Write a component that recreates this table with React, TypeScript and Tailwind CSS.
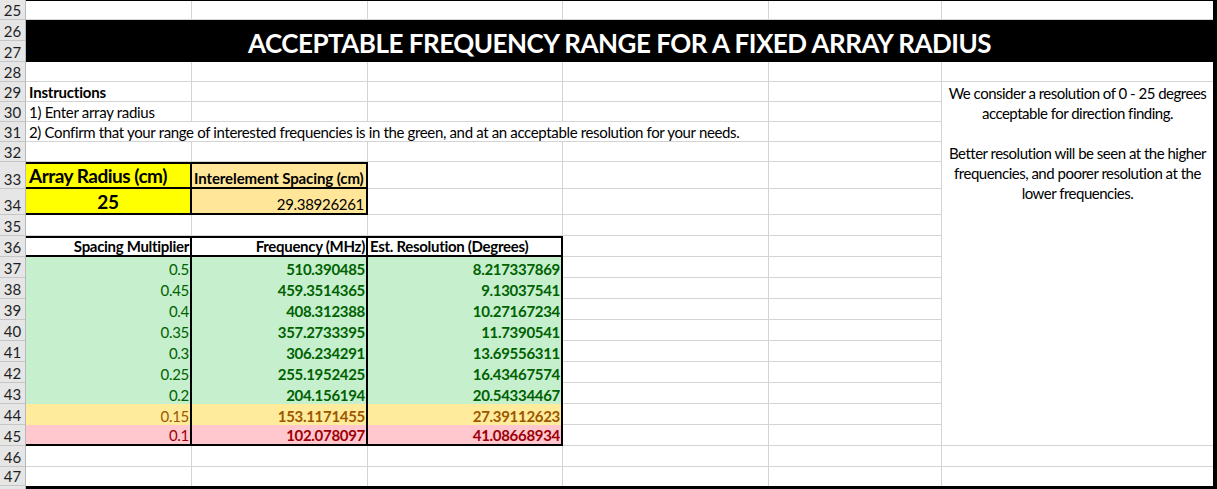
import React from "react";

const headerRows = [
  { n: 25, h: "h-[20px]" },
  { n: 26, h: "h-[21px]" },
  { n: 27, h: "h-[21px]" },
  { n: 28, h: "h-[20px]" },
  { n: 29, h: "h-[20px]" },
  { n: 30, h: "h-[20px]" },
  { n: 31, h: "h-[20px]" },
  { n: 32, h: "h-[20px]" },
  { n: 33, h: "h-[27px]" },
  { n: 34, h: "h-[26px]" },
  { n: 35, h: "h-[21px]" },
  { n: 36, h: "h-[21px]" },
  { n: 37, h: "h-[21px]" },
  { n: 38, h: "h-[21px]" },
  { n: 39, h: "h-[21px]" },
  { n: 40, h: "h-[21px]" },
  { n: 41, h: "h-[21px]" },
  { n: 42, h: "h-[21px]" },
  { n: 43, h: "h-[21px]" },
  { n: 44, h: "h-[21px]" },
  { n: 45, h: "h-[21px]" },
  { n: 46, h: "h-[21px]" },
  { n: 47, h: "h-[19px]" },
];

const tableRows = [
  { m: "0.5", f: "510.390485", r: "8.217337869", tone: "good" },
  { m: "0.45", f: "459.3514365", r: "9.13037541", tone: "good" },
  { m: "0.4", f: "408.312388", r: "10.27167234", tone: "good" },
  { m: "0.35", f: "357.2733395", r: "11.7390541", tone: "good" },
  { m: "0.3", f: "306.234291", r: "13.69556311", tone: "good" },
  { m: "0.25", f: "255.1952425", r: "16.43467574", tone: "good" },
  { m: "0.2", f: "204.156194", r: "20.54334467", tone: "good" },
  { m: "0.15", f: "153.1171455", r: "27.39112623", tone: "warn" },
  { m: "0.1", f: "102.078097", r: "41.08668934", tone: "bad" },
];

const toneClass: Record<string, string> = {
  good: "bg-[#c6efce] text-[#006100]",
  warn: "bg-[#ffeb9c] text-[#9c5700]",
  bad: "bg-[#ffc7ce] text-[#9c0006]",
};

// plain gridline cell
const g = "border-r border-b border-[#d4d4d4]";
const gF = "border-b border-[#d4d4d4]";

const Blank = ({ last }: { last?: boolean }) => <div className={last ? gF : g} />;

const App: React.FC = () => {
  return (
    <div className="flex w-[1217px] h-[489px] bg-white font-['Lato','Liberation_Sans',sans-serif] text-[15px] tracking-[-0.3px] text-black overflow-hidden">
      {/* row numbers */}
      <div className="flex flex-col w-[26px] shrink-0 bg-[#e6e6e6] border-r border-[#b8b8b8]">
        {headerRows.map((r) => (
          <div
            key={r.n}
            className={`${r.h} flex items-end justify-center border-b border-[#c6c6c6] text-[15px] tracking-normal leading-[18px] text-[#1f1f1f]`}
          >
            {r.n}
          </div>
        ))}
        <div className="h-[3px]" />
      </div>

      {/* sheet */}
      <div className="grid grid-cols-[166px_176px_195px_206px_173px_271px] grid-rows-[19px_21px_21px_20px_20px_20px_20px_20px_27px_26px_21px_21px_21px_21px_21px_21px_21px_21px_21px_21px_21px_21px_19px] border-t border-r-4 border-b-[3px] border-black">
        {/* 25 */}
        <Blank />
        <Blank />
        <Blank />
        <Blank />
        <Blank />
        <Blank last />

        {/* 26-27 title */}
        <div className="col-span-6 row-span-2 bg-black flex items-center justify-center pt-[4px] text-white font-bold text-[26px] tracking-[-0.5px] leading-none whitespace-nowrap">
          ACCEPTABLE FREQUENCY RANGE FOR A FIXED ARRAY RADIUS
        </div>

        {/* 28 */}
        <Blank />
        <Blank />
        <Blank />
        <Blank />
        <Blank />
        <Blank last />

        {/* 29 */}
        <div className={`${g} flex items-end pl-[3px] font-bold tracking-[-0.2px] leading-[18px]`}>Instructions</div>
        <Blank />
        <Blank />
        <Blank />
        <Blank />
        <div className="row-span-17 border-b border-[#d4d4d4] flex flex-col items-center pt-[1px] leading-[20px] tracking-[-0.5px] text-center whitespace-nowrap">
          <span>We consider a resolution of 0 - 25 degrees</span>
          <span>acceptable for direction finding.</span>
          <span>&nbsp;</span>
          <span>Better resolution will be seen at the higher</span>
          <span>frequencies, and poorer resolution at the</span>
          <span>lower frequencies.</span>
        </div>

        {/* 30 */}
        <div className={`${g} flex items-end pl-[3px] leading-[18px]`}>1) Enter array radius</div>
        <Blank />
        <Blank />
        <Blank />
        <Blank />

        {/* 31 - text overflows into B..D */}
        <div className="border-b border-[#d4d4d4] flex items-end pl-[3px] leading-[18px] tracking-[-0.35px] whitespace-nowrap overflow-visible relative z-10">
          2) Confirm that your range of interested frequencies is in the green, and at an acceptable resolution for your needs.
        </div>
        <div className="border-b border-[#d4d4d4]" />
        <div className="border-b border-[#d4d4d4]" />
        <Blank />
        <Blank />

        {/* 32 */}
        <Blank />
        <Blank />
        <Blank />
        <Blank />
        <Blank />

        {/* 33 */}
        <div className="bg-[#ffff00] border-t-2 border-b-2 border-r-2 border-black flex items-end pl-[3px] font-bold text-[19px] tracking-[-0.5px] leading-[22px]">
          Array Radius (cm)
        </div>
        <div className="bg-[#ffe699] border-t-2 border-b-2 border-r-2 border-black flex items-end pl-[2px] font-bold tracking-[-0.1px] leading-[18px] whitespace-nowrap">
          Interelement Spacing (cm)
        </div>
        <Blank />
        <Blank />
        <Blank />

        {/* 34 */}
        <div className="bg-[#ffff00] border-b-2 border-r-2 border-black flex items-end justify-center font-bold text-[19px] leading-[22px]">
          25
        </div>
        <div className="bg-[#ffe699] border-b-2 border-r-2 border-black flex items-end justify-end pr-[2px] leading-[18px]">
          29.38926261
        </div>
        <Blank />
        <Blank />
        <Blank />

        {/* 35 */}
        <Blank />
        <Blank />
        <Blank />
        <Blank />
        <Blank />

        {/* 36 */}
        <div className="border-t-2 border-b-2 border-r-2 border-black flex items-end justify-end pr-[1px] font-bold tracking-[-0.3px] leading-[18px] whitespace-nowrap">
          Spacing Multiplier
        </div>
        <div className="border-t-2 border-b-2 border-r-2 border-black flex items-end justify-end pr-[1px] font-bold tracking-[-0.3px] leading-[18px] whitespace-nowrap">
          Frequency (MHz)
        </div>
        <div className="border-t-2 border-b-2 border-r-2 border-black flex items-end pl-[2px] font-bold tracking-[-0.3px] leading-[18px] whitespace-nowrap">
          Est. Resolution (Degrees)
        </div>
        <Blank />
        <Blank />

        {/* 37-45 */}
        {tableRows.map((row, i) => {
          const last = i === tableRows.length - 1;
          const edge = last ? "border-r-2 border-b-2 border-black" : "border-r-2 border-black";
          const tone = toneClass[row.tone];
          return (
            <React.Fragment key={row.m}>
              <div className={`${tone} ${edge} flex items-end justify-end pr-[1px] leading-[18px]`}>{row.m}</div>
              <div className={`${tone} ${edge} flex items-end justify-end pr-[1px] font-bold leading-[18px]`}>{row.f}</div>
              <div className={`${tone} ${edge} flex items-end justify-end pr-[1px] font-bold leading-[18px]`}>{row.r}</div>
              <Blank />
              <Blank />
            </React.Fragment>
          );
        })}

        {/* 46 */}
        <Blank />
        <Blank />
        <Blank />
        <Blank />
        <Blank />
        <Blank last />

        {/* 47 */}
        <div className="border-r border-[#d4d4d4]" />
        <div className="border-r border-[#d4d4d4]" />
        <div className="border-r border-[#d4d4d4]" />
        <div className="border-r border-[#d4d4d4]" />
        <div className="border-r border-[#d4d4d4]" />
        <div />
      </div>
    </div>
  );
};

export default App;
